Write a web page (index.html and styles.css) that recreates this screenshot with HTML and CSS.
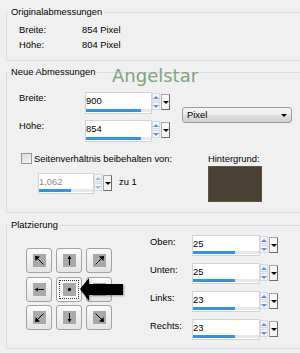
FILE: index.html
```html
<!DOCTYPE html>
<html lang="de">
<head>
<meta charset="utf-8">
<title>Bildgröße</title>
<link rel="stylesheet" href="styles.css">
</head>
<body>
<div class="dlg">
  <fieldset class="grp g1">
    <legend>Originalabmessungen</legend>
    <div class="kv"><span class="k">Breite:</span><span>854 Pixel</span></div>
    <div class="kv"><span class="k">Höhe:</span><span>804 Pixel</span></div>
  </fieldset>

  <fieldset class="grp g2">
    <legend>Neue Abmessungen</legend>
    <div class="dims">
      <div class="dimrows">
        <div class="row">
          <span class="lbl">Breite:</span>
          <div class="spin">
            <div class="field f67 tall"><span class="val">900</span><div class="track"><div class="fill" style="width:85%"></div></div></div>
            <div class="arrows"><i class="up"></i><i class="dn"></i></div>
            <div class="drop"><i></i></div>
          </div>
        </div>
        <div class="row">
          <span class="lbl">Höhe:</span>
          <div class="spin">
            <div class="field f67 tall"><span class="val">854</span><div class="track"><div class="fill" style="width:84%"></div></div></div>
            <div class="arrows"><i class="up"></i><i class="dn"></i></div>
            <div class="drop"><i></i></div>
          </div>
        </div>
      </div>
      <div class="select"><span>Pixel</span><i></i></div>
    </div>
    <div class="ratio">
      <div class="ratioleft">
        <div class="chk"><span class="box"></span><span>Seitenverhältnis beibehalten von:</span></div>
        <div class="ratioval">
          <div class="spin">
            <div class="field f56 dis"><span class="val">1,062</span><div class="track"><div class="fill" style="width:59%"></div></div></div>
            <div class="arrows dis"><i class="up"></i><i class="dn"></i></div>
            <div class="drop"><i></i></div>
          </div>
          <span class="zu">zu 1</span>
        </div>
      </div>
      <div class="bg">
        <span class="bglbl">Hintergrund:</span>
        <div class="swatch"></div>
      </div>
    </div>
  </fieldset>

  <fieldset class="grp g3">
    <legend>Platzierung</legend>
    <div class="place">
      <div class="grid">
        <div class="pb"><svg viewBox="0 0 13 13" width="13" height="13"><rect class="sq" x="0" y="0" width="13" height="13"/><path d="M10.5 10.5L3 3"/><polygon points="2,2 7,2.6 2.6,7"/></svg></div>
        <div class="pb"><svg viewBox="0 0 13 13" width="13" height="13"><rect class="sq" x="0" y="0" width="13" height="13"/><path d="M6.5 11V3"/><polygon points="6.5,1.5 4.5,5 8.5,5"/></svg></div>
        <div class="pb"><svg viewBox="0 0 13 13" width="13" height="13"><rect class="sq" x="0" y="0" width="13" height="13"/><path d="M2.5 10.5L10 3"/><polygon points="11,2 6,2.6 10.4,7"/></svg></div>
        <div class="pb"><svg viewBox="0 0 13 13" width="13" height="13"><rect class="sq" x="0" y="0" width="13" height="13"/><path d="M11 6.5H3"/><polygon points="1.5,6.5 5,4.5 5,8.5"/></svg></div>
        <div class="pb sel"><div class="focus"><svg viewBox="0 0 13 13" width="13" height="13"><rect class="sq" x="0" y="0" width="13" height="13"/><circle cx="6.5" cy="6.5" r="1.7"/></svg></div></div>
        <div class="pb"><svg viewBox="0 0 13 13" width="13" height="13"><rect class="sq" x="0" y="0" width="13" height="13"/><path d="M2 6.5H10"/><polygon points="11.5,6.5 8,4.5 8,8.5"/></svg></div>
        <div class="pb"><svg viewBox="0 0 13 13" width="13" height="13"><rect class="sq" x="0" y="0" width="13" height="13"/><path d="M10.5 2.5L3 10"/><polygon points="2,11 2.6,6 7,10.4"/></svg></div>
        <div class="pb"><svg viewBox="0 0 13 13" width="13" height="13"><rect class="sq" x="0" y="0" width="13" height="13"/><path d="M6.5 2V10"/><polygon points="6.5,11.5 4.5,8 8.5,8"/></svg></div>
        <div class="pb"><svg viewBox="0 0 13 13" width="13" height="13"><rect class="sq" x="0" y="0" width="13" height="13"/><path d="M2.5 2.5L10 10"/><polygon points="11,11 6,10.4 10.4,6"/></svg></div>
      </div>
      <div class="margins">
        <div class="mrow"><span class="mlbl">Oben:</span>
          <div class="spin"><div class="field f68"><span class="val">25</span><div class="track"><div class="fill" style="width:63%"></div></div></div><div class="arrows"><i class="up"></i><i class="dn"></i></div><div class="drop"><i></i></div></div>
        </div>
        <div class="mrow"><span class="mlbl">Unten:</span>
          <div class="spin"><div class="field f68"><span class="val">25</span><div class="track"><div class="fill" style="width:63%"></div></div></div><div class="arrows"><i class="up"></i><i class="dn"></i></div><div class="drop"><i></i></div></div>
        </div>
        <div class="mrow"><span class="mlbl">Links:</span>
          <div class="spin"><div class="field f68"><span class="val">23</span><div class="track"><div class="fill" style="width:63%"></div></div></div><div class="arrows"><i class="up"></i><i class="dn"></i></div><div class="drop"><i></i></div></div>
        </div>
        <div class="mrow"><span class="mlbl">Rechts:</span>
          <div class="spin"><div class="field f68"><span class="val">23</span><div class="track"><div class="fill" style="width:63%"></div></div></div><div class="arrows"><i class="up"></i><i class="dn"></i></div><div class="drop"><i></i></div></div>
        </div>
      </div>
    </div>
  </fieldset>

  <div class="wm">Angelstar</div>
  <svg class="pointer" viewBox="0 0 48 27" width="48" height="27"><polygon points="2,13 11,2 11,8 45,8 45,19 11,19 11,25"/></svg>
</div>
</body>
</html>
```

FILE: styles.css
```css
* { box-sizing: border-box; }
html, body { margin: 0; padding: 0; }
body {
  width: 300px;
  height: 353px;
  overflow: hidden;
  background: #f0f0f0;
  font-family: "Liberation Sans", Arial, sans-serif;
  font-size: 9.4px;
  color: #000;
}
.dlg { position: relative; padding-top: 6px; height: 353px; }

.grp {
  margin: 0 0 0 6px;
  border: 1px solid #d5dfe5;
  border-right: none;
  padding: 4px 0 8px 12px;
  min-width: 0;
}
.grp legend {
  margin-left: -10px;
  padding: 0 2px;
  line-height: 12px;
}

/* group 1 */
.kv { display: flex; line-height: 15px; }
.k { width: 63px; }

/* group 2 */
.g2 { margin-top: 5px; padding-top: 14px; padding-bottom: 10px; }
.dims { display: flex; }
.dimrows { display: flex; flex-direction: column; gap: 6px; }
.row { display: flex; align-items: flex-start; }
.lbl { width: 66px; line-height: 11px; }

.spin { display: flex; align-items: flex-start; }
.field {
  height: 21px;
  border: 1px solid #d3d3d3;
  background: #fff;
  display: flex;
  flex-direction: column;
}
.field.tall { height: 22px; }
.f67 { width: 67px; }
.f68 { width: 68px; }
.f56 { width: 56px; }
.val { line-height: 15px; }
.field.dis .val { color: #8c8c8c; }
.track { margin-top: auto; margin-bottom: 1px; height: 3px; background: #e8e8e8; }
.fill { height: 100%; background: #3592ea; }

.arrows {
  width: 8px;
  margin-top: 1px;
  display: flex;
  flex-direction: column;
  gap: 1px;
}
.arrows i {
  display: flex;
  align-items: center;
  justify-content: center;
  width: 8px;
  height: 8px;
  border: 1px solid #d4dbe6;
  background: #f3f6fb;
}
.arrows i::before {
  content: "";
  border-left: 3px solid transparent;
  border-right: 3px solid transparent;
}
.arrows .up::before { border-bottom: 3px solid #6b8cc8; }
.arrows .dn::before { border-top: 3px solid #6b8cc8; }
.arrows.dis .up::before { border-bottom-color: #aab4c4; }
.arrows.dis .dn::before { border-top-color: #aab4c4; }

.drop {
  width: 9px;
  height: 16px;
  margin: 2px 0 0 1px;
  border: 1px solid #6a6a6a;
  border-top-color: #a8a8a8;
  border-left-color: #a8a8a8;
  background: #f6f6f6;
  display: flex;
  align-items: center;
  justify-content: center;
}
.drop i {
  border-left: 3px solid transparent;
  border-right: 3px solid transparent;
  border-top: 3px solid #000;
}

.select {
  margin: 15px 0 0 12px;
  width: 110px;
  height: 16px;
  border: 1px solid #9c9c9c;
  border-radius: 3px;
  background: linear-gradient(#f4f4f4 0%, #ececec 50%, #dedede 51%, #d2d2d2 100%);
  display: flex;
  align-items: center;
  justify-content: space-between;
  padding: 0 4px;
  line-height: 14px;
}
.select i {
  border-left: 3px solid transparent;
  border-right: 3px solid transparent;
  border-top: 3px solid #000;
}

.ratio { display: flex; margin-top: 11px; }
.ratioleft { width: 189px; }
.chk { display: flex; align-items: center; height: 11px; line-height: 11px; }
.box {
  width: 11px;
  height: 11px;
  margin: 0 2px;
  border: 1px solid #979797;
  background: linear-gradient(135deg, #d9d9d9, #f6f6f6);
}
.ratioval { display: flex; align-items: flex-start; margin: 9px 0 0 19px; }
.zu { margin-left: 7px; line-height: 18px; }
.bg { display: flex; flex-direction: column; }
.bglbl { line-height: 12px; }
.swatch {
  margin-top: 1px;
  width: 54px;
  height: 36px;
  background: #4a4134;
  border: 1px solid #5e5546;
}

/* group 3 */
.g3 { margin-top: 6px; padding-top: 4px; padding-bottom: 8px; }
.place { display: flex; align-items: flex-start; }
.grid {
  display: grid;
  grid-template-columns: repeat(3, 26px);
  grid-auto-rows: 25px;
  column-gap: 4px;
  row-gap: 3.5px;
  margin: 13px 0 0 7px;
}
.pb {
  border: 1px solid #a2a2a2;
  border-radius: 3px;
  background: linear-gradient(#fbfbfb, #e4e4e4);
  display: flex;
  align-items: center;
  justify-content: center;
}
.pb svg { display: block; }
.pb svg .sq { fill: #a9a9a9; }
.pb svg path { stroke: #000; stroke-width: 1; fill: none; }
.pb svg polygon, .pb svg circle { fill: #000; }
.pb.sel { padding: 2px; background: #f7f7f7; }
.focus {
  flex: 1;
  align-self: stretch;
  border: 1px dotted #333;
  background: #fff;
  display: flex;
  align-items: center;
  justify-content: center;
}

.margins {
  margin-left: 38px;
  display: flex;
  flex-direction: column;
  gap: 7px;
}
.mrow { display: flex; align-items: flex-start; }
.mlbl { width: 42px; line-height: 14px; }

/* overlays */
.wm {
  position: absolute;
  left: 112px;
  top: 67px;
  font-family: "DejaVu Sans", sans-serif;
  font-size: 18px;
  line-height: 18px;
  color: #80a380;
}
.pointer {
  position: absolute;
  left: 78px;
  top: 276px;
  filter: drop-shadow(1px 1px 1px rgba(0,0,0,0.35));
}
.pointer polygon { fill: #000; }
```
